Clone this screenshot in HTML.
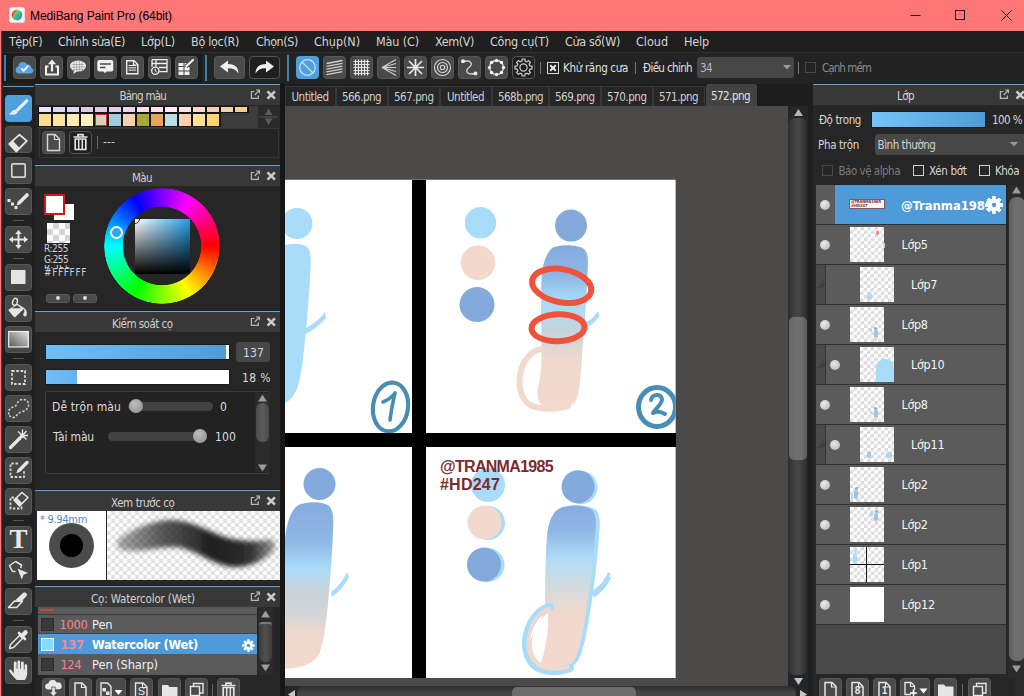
<!DOCTYPE html>
<html lang="vi"><head><meta charset="utf-8"><title>MediBang Paint Pro (64bit)</title>
<style>
html,body{margin:0;padding:0;background:#222;}
body{width:1024px;height:696px;overflow:hidden;}
#app{position:relative;width:1024px;height:696px;overflow:hidden;background:#232323;font-family:"DejaVu Sans Condensed","Liberation Sans","DejaVu Sans",sans-serif;font-size:12px;color:#d6d6d6;}
#app div,#app span.t,#app svg{position:absolute;box-sizing:border-box;}
span.t{white-space:pre;}
.btn{background:#4a4a4a;border-radius:3.5px;border:1px solid #585858;}
.btnd{background:#1f1f1f;border-radius:4px;border:1px solid #555;}
.tool{background:#474747;border-radius:3.5px;border:1px solid #585858;}
.hdr{background:#383838;border-top:1px solid #6aa6d2;box-shadow:0 -1px 0 #10202c;}
.tab{background:#262626;border:1px solid #383838;border-bottom:none;}
.row{background:#5b5b5b;border-bottom:1px solid #2e2e2e;}

</style></head>
<body>
<div id="app">
<div style="left:0px;top:0px;width:1024px;height:31px;background:#ff7676;"></div>
<div style="left:0px;top:31px;width:1px;height:665px;background:#ff7676;"></div>
<div style="left:1px;top:31px;width:1px;height:665px;background:#6a3434;"></div>
<svg style="left:9px;top:7px" width="16" height="16" viewBox="0 0 16 16"><defs><linearGradient id="lg0" x1="0" y1="0" x2="1" y2="1"><stop offset="0" stop-color="#f0e040"/><stop offset=".5" stop-color="#40c080"/><stop offset="1" stop-color="#2080d0"/></linearGradient></defs><rect x=".2" y=".2" width="15.600" height="15.600" rx="2.500" fill="#f4f4f4"/><circle cx="8" cy="8" r="5.300" fill="url(#lg0)"/><path d="M8 2.700a5.300 5.300 0 0 0-4.500 8c1-3 2.500-5 4.500-8z" fill="#f05040"/></svg>
<svg style="left:900px;top:0" width="124" height="31" viewBox="0 0 124 31"><g stroke="#111" stroke-width="1" fill="none"><path d="M10.5 15.5h10"/><rect x="55.5" y="10.5" width="9" height="9"/><path d="M101.5 10.5l10 10M111.5 10.5l-10 10"/></g></svg>
<div style="left:2px;top:31px;width:1022px;height:22px;background:#1f1f1f;"></div>
<div style="left:2px;top:52px;width:1022px;height:1px;background:#2e2e2e;"></div>
<div style="left:2px;top:53px;width:1022px;height:30px;background:#232323;"></div>
<div style="left:2px;top:53px;width:200px;height:30px;background:#1b1b1b;"></div>
<div style="left:4px;top:55px;width:2px;height:26px;background:#3f7fae;"></div>
<div style="left:205px;top:55px;width:2px;height:26px;background:#3f7fae;"></div>
<div style="left:287px;top:55px;width:2px;height:26px;background:#3f7fae;"></div>
<div class="btn" style="left:13px;top:56px;width:23px;height:23px;"></div>
<div class="btn" style="left:40px;top:56px;width:23px;height:23px;"></div>
<div class="btn" style="left:67px;top:56px;width:23px;height:23px;"></div>
<div class="btn" style="left:94px;top:56px;width:23px;height:23px;"></div>
<div class="btn" style="left:121px;top:56px;width:23px;height:23px;"></div>
<div class="btn" style="left:148px;top:56px;width:23px;height:23px;"></div>
<div class="btn" style="left:175px;top:56px;width:23px;height:23px;"></div>
<div class="btn" style="left:214px;top:56px;width:31px;height:23px;"></div>
<div class="btnd" style="left:249px;top:56px;width:31px;height:23px;"></div>
<div class="btn" style="left:296px;top:56px;width:23px;height:23px;background:#4f9fdc;border-color:#4f9fdc;"></div>
<div class="btn" style="left:323px;top:56px;width:23px;height:23px;"></div>
<div class="btn" style="left:350px;top:56px;width:23px;height:23px;"></div>
<div class="btn" style="left:377px;top:56px;width:23px;height:23px;"></div>
<div class="btn" style="left:404px;top:56px;width:23px;height:23px;"></div>
<div class="btn" style="left:431px;top:56px;width:23px;height:23px;"></div>
<div class="btn" style="left:458px;top:56px;width:23px;height:23px;"></div>
<div class="btn" style="left:485px;top:56px;width:23px;height:23px;"></div>
<div class="btnd" style="left:512px;top:56px;width:23px;height:23px;"></div>
<div style="left:540px;top:62px;width:1px;height:12px;background:#777;"></div>
<div style="left:635px;top:62px;width:1px;height:12px;background:#777;"></div>
<div style="left:798px;top:62px;width:1px;height:12px;background:#777;"></div>
<svg style="left:547px;top:62px" width="12" height="12" viewBox="0 0 12 12"><rect x=".5" y=".5" width="11" height="11" fill="#222" stroke="#d8d8d8"/><path d="M3.2 3.2l5.6 5.6M8.8 3.2l-5.6 5.6" stroke="#e8e8e8" stroke-width="2"/></svg>
<div style="left:697px;top:57px;width:97px;height:21px;background:#474747;border-radius:3px;"></div>
<svg style="left:783px;top:65px" width="8" height="5" viewBox="0 0 8 5"><path d="M0 0h8l-4 4.500z" fill="#9a9a9a"/></svg>
<div style="left:805px;top:62px;width:11px;height:11px;border:1px solid #4a4a4a;"></div>
<div style="left:2px;top:83px;width:33px;height:613px;background:#212121;"></div>
<div style="left:3px;top:86px;width:31px;height:1px;background:#5c9cc8;"></div>
<div class="tool" style="left:5px;top:95px;width:27px;height:27px;background:#4f9fdc;border-color:#4f9fdc;"></div>
<div class="tool" style="left:5px;top:126px;width:27px;height:27px;"></div>
<div class="tool" style="left:5px;top:157px;width:27px;height:27px;"></div>
<div class="tool" style="left:5px;top:188px;width:27px;height:27px;"></div>
<div class="tool" style="left:5px;top:226px;width:27px;height:27px;"></div>
<div class="tool" style="left:5px;top:264px;width:27px;height:27px;"></div>
<div class="tool" style="left:5px;top:295px;width:27px;height:27px;"></div>
<div class="tool" style="left:5px;top:326px;width:27px;height:27px;"></div>
<div class="tool" style="left:5px;top:364px;width:27px;height:27px;"></div>
<div class="tool" style="left:5px;top:395px;width:27px;height:27px;"></div>
<div class="tool" style="left:5px;top:426px;width:27px;height:27px;"></div>
<div class="tool" style="left:5px;top:457px;width:27px;height:27px;"></div>
<div class="tool" style="left:5px;top:488px;width:27px;height:27px;"></div>
<div class="tool" style="left:5px;top:526px;width:27px;height:27px;"></div>
<div class="tool" style="left:5px;top:557px;width:27px;height:27px;"></div>
<div class="tool" style="left:5px;top:588px;width:27px;height:27px;"></div>
<div class="tool" style="left:5px;top:626px;width:27px;height:27px;"></div>
<div class="tool" style="left:5px;top:657px;width:27px;height:27px;"></div>
<div style="left:13px;top:220px;width:11px;height:1px;background:#555;"></div>
<div style="left:13px;top:258px;width:11px;height:1px;background:#555;"></div>
<div style="left:13px;top:358px;width:11px;height:1px;background:#555;"></div>
<div style="left:13px;top:520px;width:11px;height:1px;background:#555;"></div>
<div style="left:13px;top:620px;width:11px;height:1px;background:#555;"></div>
<div style="left:35px;top:83px;width:250px;height:613px;background:#262626;"></div>
<div style="left:280px;top:83px;width:5px;height:613px;background:#171717;"></div>
<div class="hdr" style="left:35px;top:84px;width:245px;height:21px;"></div>
<svg style="left:250px;top:89px" width="28" height="12" viewBox="0 0 28 12"><g transform="translate(.8 .3) scale(.88)"><path d="M4 2.500h-3.300v7.800h7.800v-3.300" fill="none" stroke="#b8b8b8" stroke-width="1.400"/><path d="M4.500 6.500l5-5.300M6 .800h3.800v3.800" fill="none" stroke="#b8b8b8" stroke-width="1.400"/></g><path d="M17.500 2.300l7.400 7.400M24.900 2.300l-7.400 7.400" stroke="#cacaca" stroke-width="2.600"/></svg>
<div class="hdr" style="left:35px;top:165px;width:245px;height:21px;"></div>
<svg style="left:250px;top:170px" width="28" height="12" viewBox="0 0 28 12"><g transform="translate(.8 .3) scale(.88)"><path d="M4 2.500h-3.300v7.800h7.800v-3.300" fill="none" stroke="#b8b8b8" stroke-width="1.400"/><path d="M4.500 6.500l5-5.300M6 .800h3.800v3.800" fill="none" stroke="#b8b8b8" stroke-width="1.400"/></g><path d="M17.500 2.300l7.400 7.400M24.900 2.300l-7.400 7.400" stroke="#cacaca" stroke-width="2.600"/></svg>
<div class="hdr" style="left:35px;top:311px;width:245px;height:21px;"></div>
<svg style="left:250px;top:316px" width="28" height="12" viewBox="0 0 28 12"><g transform="translate(.8 .3) scale(.88)"><path d="M4 2.500h-3.300v7.800h7.800v-3.300" fill="none" stroke="#b8b8b8" stroke-width="1.400"/><path d="M4.500 6.500l5-5.300M6 .800h3.800v3.800" fill="none" stroke="#b8b8b8" stroke-width="1.400"/></g><path d="M17.500 2.300l7.400 7.400M24.900 2.300l-7.400 7.400" stroke="#cacaca" stroke-width="2.600"/></svg>
<div class="hdr" style="left:35px;top:490px;width:245px;height:21px;"></div>
<svg style="left:250px;top:495px" width="28" height="12" viewBox="0 0 28 12"><g transform="translate(.8 .3) scale(.88)"><path d="M4 2.500h-3.300v7.800h7.800v-3.300" fill="none" stroke="#b8b8b8" stroke-width="1.400"/><path d="M4.500 6.500l5-5.300M6 .800h3.800v3.800" fill="none" stroke="#b8b8b8" stroke-width="1.400"/></g><path d="M17.500 2.300l7.400 7.400M24.900 2.300l-7.400 7.400" stroke="#cacaca" stroke-width="2.600"/></svg>
<div class="hdr" style="left:35px;top:586px;width:245px;height:21px;"></div>
<svg style="left:250px;top:591px" width="28" height="12" viewBox="0 0 28 12"><g transform="translate(.8 .3) scale(.88)"><path d="M4 2.500h-3.300v7.800h7.800v-3.300" fill="none" stroke="#b8b8b8" stroke-width="1.400"/><path d="M4.500 6.500l5-5.300M6 .800h3.800v3.800" fill="none" stroke="#b8b8b8" stroke-width="1.400"/></g><path d="M17.500 2.300l7.400 7.400M24.900 2.300l-7.400 7.400" stroke="#cacaca" stroke-width="2.600"/></svg>
<div style="left:38px;top:106px;width:220px;height:22px;background:#3c3c3c;"></div>
<div style="left:38px;top:106px;width:211px;height:7px;background:#141414;"></div>
<div style="left:38px;top:113px;width:183px;height:14px;background:#141414;"></div>
<div style="left:39px;top:107px;width:12px;height:5px;background:#e4e4fa;"></div>
<div style="left:53px;top:107px;width:12px;height:5px;background:#dcd8f4;"></div>
<div style="left:67px;top:107px;width:12px;height:5px;background:#dcd6f2;"></div>
<div style="left:81px;top:107px;width:12px;height:5px;background:#dccae8;"></div>
<div style="left:95px;top:107px;width:12px;height:5px;background:#e2c6e2;"></div>
<div style="left:109px;top:107px;width:12px;height:5px;background:#e8cce6;"></div>
<div style="left:123px;top:107px;width:12px;height:5px;background:#ecd6ee;"></div>
<div style="left:137px;top:107px;width:12px;height:5px;background:#f8dee8;"></div>
<div style="left:151px;top:107px;width:12px;height:5px;background:#fbe2e6;"></div>
<div style="left:165px;top:107px;width:12px;height:5px;background:#fdeaf6;"></div>
<div style="left:179px;top:107px;width:12px;height:5px;background:#fce2e0;"></div>
<div style="left:193px;top:107px;width:12px;height:5px;background:#fbd8d0;"></div>
<div style="left:207px;top:107px;width:12px;height:5px;background:#f9cdb6;"></div>
<div style="left:221px;top:107px;width:12px;height:5px;background:#f8d0b0;"></div>
<div style="left:235px;top:107px;width:12px;height:5px;background:#f8cf8a;"></div>
<div style="left:39px;top:114px;width:12px;height:12px;background:#fbdc8c;"></div>
<div style="left:53px;top:114px;width:12px;height:12px;background:#fde5a0;"></div>
<div style="left:67px;top:114px;width:12px;height:12px;background:#fdeab0;"></div>
<div style="left:81px;top:114px;width:12px;height:12px;background:#fdf0bc;"></div>
<div style="left:95px;top:114px;width:12px;height:12px;background:#d8d2b4;border:1px solid #d03030;"></div>
<div style="left:109px;top:114px;width:12px;height:12px;background:#a4cce0;"></div>
<div style="left:123px;top:114px;width:12px;height:12px;background:#f7d0b4;"></div>
<div style="left:137px;top:114px;width:12px;height:12px;background:#a8a838;"></div>
<div style="left:151px;top:114px;width:12px;height:12px;background:#e8a45c;"></div>
<div style="left:165px;top:114px;width:12px;height:12px;background:#b8e0e0;"></div>
<div style="left:179px;top:114px;width:12px;height:12px;background:#fbcfb0;"></div>
<div style="left:193px;top:114px;width:12px;height:12px;background:#fde090;"></div>
<div style="left:207px;top:114px;width:12px;height:12px;background:#fcd470;"></div>
<div style="left:258px;top:106px;width:22px;height:22px;background:#2a2a2a;"></div>
<svg style="left:259px;top:107px" width="20" height="20" viewBox="0 0 20 20"><path d="M9.500 1.500l3.800 6.500h-7.600zM9.500 18l3.800-6.500h-7.600z" fill="#5c5c5c"/><path d="M0 10h19" stroke="#484848" stroke-width="1.500"/></svg>
<div style="left:39px;top:128px;width:240px;height:30px;background:#252525;border:1px solid #363636;"></div>
<div class="btn" style="left:42px;top:131px;width:23px;height:23px;"></div>
<div class="btnd" style="left:69px;top:131px;width:23px;height:23px;"></div>
<div style="left:97px;top:136px;width:1px;height:13px;background:#666;"></div>
<div style="left:44px;top:194px;width:21px;height:21px;background:#fff;border:2px solid #d01818;z-index:2;"></div>
<div style="left:54px;top:204px;width:20px;height:16px;background:#fff;"></div>
<div style="left:47px;top:223px;width:23px;height:20px;background:#fff;background-image:linear-gradient(45deg,#d4d4d4 25%,transparent 25%,transparent 75%,#d4d4d4 75%),linear-gradient(45deg,#d4d4d4 25%,transparent 25%,transparent 75%,#d4d4d4 75%);background-size:12px 12px;background-position:0 0,6px 6px;"></div>
<div style="left:44px;top:265px;width:40px;height:4px;overflow:hidden;"><span class="t" style="left:0;top:-2px;font-size:10px;line-height:12px;color:#d0d0d0">B:255</span></div>
<div style="left:46px;top:294px;width:24px;height:9px;background:#4a4a4a;border-radius:3px;border:1px solid #5a5a5a;"></div>
<div style="left:73px;top:294px;width:24px;height:9px;background:#4a4a4a;border-radius:3px;border:1px solid #5a5a5a;"></div>
<div style="left:56px;top:296px;width:4px;height:4px;background:#ddd;border-radius:2px;"></div>
<div style="left:83px;top:296px;width:4px;height:4px;background:#ddd;border-radius:2px;"></div>
<div style="left:104px;top:188px;width:116px;height:116px;border-radius:50%;background:conic-gradient(from 90deg,#f00,#ff0,#0f0,#0ff,#00f,#f0f,#f00);-webkit-mask:radial-gradient(circle,transparent 38.8px,#000 39.6px,#000 57.4px,transparent 58.2px);mask:radial-gradient(circle,transparent 38.8px,#000 39.6px,#000 57.4px,transparent 58.2px);"></div>
<div style="left:135px;top:219px;width:55px;height:55px;background:linear-gradient(to bottom,rgba(0,0,0,0),#000),linear-gradient(to right,#fff,#1f9fe8);overflow:hidden;"><div style="left:-5px;top:-5px;width:10px;height:10px;border:1px solid #333;border-radius:50%;background:#f4f4f4"></div></div>
<div style="left:110px;top:226px;width:13px;height:13px;border:2.5px solid #fff;border-radius:50%;background:#2aa8f0;"></div>
<div style="left:45px;top:344px;width:185px;height:16px;background:linear-gradient(to right,#6fc0f8,#4f9bd6);border:1px solid #1a1a1a;"></div>
<div style="left:226px;top:345px;width:3px;height:14px;background:#fff;"></div>
<div style="left:236px;top:342px;width:34px;height:20px;background:#474747;border-radius:3px;"></div>
<div style="left:45px;top:369px;width:185px;height:16px;background:#fff;border:1px solid #1a1a1a;"></div>
<div style="left:46px;top:370px;width:31px;height:14px;background:linear-gradient(to right,#6fc0f8,#62b4f0);"></div>
<div style="left:45px;top:391px;width:225px;height:83px;background:#222;border:1px solid #3c3c3c;border-radius:2px;"></div>
<div style="left:128px;top:402px;width:85px;height:9px;background:#424242;border-radius:5px;"></div>
<div style="left:129px;top:399px;width:14px;height:14px;border-radius:50%;background:radial-gradient(circle at 40% 35%,#bdbdbd,#8a8a8a);"></div>
<div style="left:108px;top:432px;width:99px;height:9px;background:#424242;border-radius:5px;"></div>
<div style="left:193px;top:429px;width:14px;height:14px;border-radius:50%;background:radial-gradient(circle at 40% 35%,#bdbdbd,#8a8a8a);"></div>
<div style="left:255px;top:393px;width:15px;height:79px;background:#2b2b2b;"></div>
<div style="left:256px;top:403px;width:13px;height:39px;border-radius:6px;background:linear-gradient(to right,#4a4a4a,#5c5c5c,#4a4a4a);"></div>
<svg style="left:257px;top:394px" width="11" height="8" viewBox="0 0 11 8"><path d="M5.5 0.5l4.5 7h-9z" fill="#9a9a9a"/></svg>
<svg style="left:257px;top:464px" width="11" height="8" viewBox="0 0 11 8"><path d="M5.5 7.5l4.5-7h-9z" fill="#9a9a9a"/></svg>
<div style="left:37px;top:511px;width:69px;height:69px;background:#fff;"></div>
<div style="left:107px;top:511px;width:173px;height:69px;background-color:#fff;background-image:linear-gradient(45deg,#e2e2e2 25%,transparent 25%,transparent 75%,#e2e2e2 75%),linear-gradient(45deg,#e2e2e2 25%,transparent 25%,transparent 75%,#e2e2e2 75%);background-size:8px 8px;background-position:0 0,4px 4px;"></div>
<svg style="left:107px;top:511px" width="173" height="69" viewBox="107 511 173 69"><defs><linearGradient id="bs" x1="0" y1="0" x2="1" y2="0"><stop offset="0" stop-color="#303030" stop-opacity=".4"/><stop offset=".3" stop-color="#2a2a2a" stop-opacity=".78"/><stop offset=".6" stop-color="#161616" stop-opacity=".96"/><stop offset=".85" stop-color="#1c1c1c" stop-opacity=".9"/><stop offset="1" stop-color="#2a2a2a" stop-opacity=".45"/></linearGradient><filter id="bl" filterUnits="userSpaceOnUse" x="100" y="505" width="190" height="80"><feGaussianBlur stdDeviation="2.400"/></filter></defs><path d="M119 539C127 533 150 520 171 520C192 520 212 534 228 538C244 542 258 542 271 539C276 541 276 549 272 553C262 561 248 568 233 567C212 565 196 549 176 547C160 546 140 553 122 550C116 548 116 542 119 539Z" fill="url(#bs)" filter="url(#bl)"/></svg>
<div style="left:49px;top:523px;width:45px;height:45px;background:#4b4b4b;border-radius:50%;"></div>
<div style="left:60px;top:534px;width:23px;height:23px;background:#000;border-radius:50%;"></div>
<div style="left:38px;top:607px;width:219px;height:68px;background:#5a5a5a;"></div>
<div style="left:38px;top:607px;width:219px;height:8px;background:#5a5a5a;border-bottom:1px solid #3a3a3a;"></div>
<div style="left:40px;top:609px;width:14px;height:2px;background:#d84040;"></div>
<div style="left:38px;top:615px;width:219px;height:19px;background:#5a5a5a;border-bottom:1px solid #444;"></div>
<div style="left:38px;top:634px;width:219px;height:20px;background:#4f9ad8;"></div>
<div style="left:38px;top:654px;width:219px;height:21px;background:#5a5a5a;"></div>
<div style="left:41px;top:618px;width:13px;height:13px;background:#3a3a3a;border:1px solid #2c2c2c;"></div>
<div style="left:41px;top:638px;width:13px;height:13px;background:#86dcf8;border:1px solid #e8f8ff;"></div>
<div style="left:41px;top:658px;width:13px;height:13px;background:#3a3a3a;border:1px solid #2c2c2c;"></div>
<div style="left:258px;top:607px;width:15px;height:68px;background:#2b2b2b;"></div>
<div style="left:259px;top:622px;width:13px;height:40px;border-radius:3px 3px 6px 6px;background:linear-gradient(to right,#3c3c3c,#505050,#3a3a3a);border-top:2px solid #7a7a7a;"></div>
<svg style="left:260px;top:610px" width="11" height="8" viewBox="0 0 11 8"><path d="M5.5 0.5l4.5 7h-9z" fill="#9a9a9a"/></svg>
<svg style="left:260px;top:664px" width="11" height="8" viewBox="0 0 11 8"><path d="M5.5 7.5l4.5-7h-9z" fill="#9a9a9a"/></svg>
<div class="btn" style="left:42px;top:678px;width:23px;height:23px;"></div>
<div class="btn" style="left:69px;top:678px;width:23px;height:23px;"></div>
<div class="btn" style="left:96px;top:678px;width:30px;height:23px;"></div>
<div class="btn" style="left:130px;top:678px;width:23px;height:23px;"></div>
<div class="btn" style="left:158px;top:678px;width:23px;height:23px;"></div>
<div class="btn" style="left:185px;top:678px;width:23px;height:23px;"></div>
<div class="btn" style="left:217px;top:678px;width:23px;height:23px;"></div>
<div style="left:212px;top:684px;width:1px;height:12px;background:#666;"></div>
<div style="left:285px;top:84px;width:525px;height:22px;background:#1d1d1d;"></div>
<div class="tab" style="left:285px;top:86px;width:51px;height:20px;"></div>
<div class="tab" style="left:336px;top:86px;width:52px;height:20px;"></div>
<div class="tab" style="left:388px;top:86px;width:52px;height:20px;"></div>
<div class="tab" style="left:440px;top:86px;width:52px;height:20px;"></div>
<div class="tab" style="left:492px;top:86px;width:57px;height:20px;"></div>
<div class="tab" style="left:549px;top:86px;width:52px;height:20px;"></div>
<div class="tab" style="left:601px;top:86px;width:52px;height:20px;"></div>
<div class="tab" style="left:653px;top:86px;width:52px;height:20px;"></div>
<div style="left:706px;top:84px;width:51px;height:22px;background:#424242;border-radius:3px 3px 0 0;border:1px solid #444;border-bottom:none;"></div>
<div style="left:285px;top:106px;width:525px;height:590px;background:#4b4a49;"></div>
<div style="left:788px;top:106px;width:20px;height:580px;background:#232628;"></div>
<div style="left:788px;top:118px;width:19px;height:557px;border-radius:7px;background:linear-gradient(to right,#2e2e2e,#424242 35%,#464646 60%,#2c2c2c);"></div>
<div style="left:789px;top:317px;width:18px;height:143px;border-radius:5px;background:linear-gradient(to right,#666,#717171 40%,#6e6e6e 70%,#5a5a5a);"></div>
<svg style="left:794px;top:109px" width="9" height="7" viewBox="0 0 9 7"><path d="M4.500 0l4.500 7h-9z" fill="#b4b4b4"/></svg>
<svg style="left:793.500px;top:677.500px" width="9" height="7" viewBox="0 0 9 7"><path d="M4.500 7l4.500-7h-9z" fill="#c4c4c4"/></svg>
<div style="left:285px;top:686px;width:523px;height:10px;background:#232628;"></div>
<div style="left:297px;top:686px;width:499px;height:14px;border-radius:7px;background:linear-gradient(to bottom,#2e2e2e,#444 50%,#484848);"></div>
<div style="left:511.5px;top:687px;width:124px;height:14px;background:#6c6c6c;border-radius:5px;"></div>
<svg style="left:288px;top:690px" width="7" height="9" viewBox="0 0 7 9"><path d="M0 4.500l7-4.500v9z" fill="#c4c4c4"/></svg>
<svg style="left:800px;top:690px" width="7" height="9" viewBox="0 0 7 9"><path d="M7 4.500l-7-4.500v9z" fill="#c4c4c4"/></svg>
<div style="left:808px;top:83px;width:5px;height:613px;background:#1e1e1e;"></div>
<div style="left:813px;top:83px;width:211px;height:613px;background:#262626;"></div>
<div class="hdr" style="left:813px;top:84px;width:211px;height:21px;"></div>
<svg style="left:999px;top:89px" width="28" height="12" viewBox="0 0 28 12"><g transform="translate(.8 .3) scale(.88)"><path d="M4 2.500h-3.300v7.800h7.800v-3.300" fill="none" stroke="#b8b8b8" stroke-width="1.400"/><path d="M4.500 6.500l5-5.300M6 .800h3.800v3.800" fill="none" stroke="#b8b8b8" stroke-width="1.400"/></g><path d="M17.500 2.300l7.400 7.400M24.900 2.300l-7.400 7.400" stroke="#cacaca" stroke-width="2.600"/></svg>
<div style="left:871px;top:111px;width:115px;height:17px;background:linear-gradient(to right,#74c4fa,#4f9bd6);border:1px solid #1a1a1a;"></div>
<div style="left:875px;top:134px;width:152px;height:21px;background:#474747;border-radius:3px;"></div>
<svg style="left:1010px;top:142px" width="8" height="5" viewBox="0 0 8 5"><path d="M0 0h8l-4 4.500z" fill="#9a9a9a"/></svg>
<div style="left:822px;top:165px;width:11px;height:11px;border:1px solid #484848;"></div>
<div style="left:913px;top:165px;width:11px;height:11px;border:1px solid #d0d0d0;"></div>
<div style="left:979px;top:165px;width:11px;height:11px;border:1px solid #d0d0d0;"></div>
<div style="left:816px;top:185px;width:190px;height:489px;background:#494949;"></div>
<div class="row" style="left:816px;top:185px;width:190px;height:40px;"></div>
<div style="left:835px;top:185px;width:171px;height:39px;background:#4f9ad8;"></div>
<div style="left:820px;top:200px;width:10px;height:10px;border-radius:50%;background:radial-gradient(circle at 40% 35%,#e8e8e8,#b4b4b4);"></div>
<div class="row" style="left:816px;top:225px;width:190px;height:40px;"></div>
<div style="left:820px;top:240px;width:10px;height:10px;border-radius:50%;background:radial-gradient(circle at 40% 35%,#e8e8e8,#b4b4b4);"></div>
<div style="left:850px;top:227px;width:34px;height:35px;background-color:#fff;background-image:linear-gradient(45deg,#dadada 25%,transparent 25%,transparent 75%,#dadada 75%),linear-gradient(45deg,#dadada 25%,transparent 25%,transparent 75%,#dadada 75%);background-size:7px 7px;background-position:0 0,3.5px 3.5px;"></div>
<div style="left:876px;top:231px;width:3px;height:4px;background:#e89090;border-radius:1px;"></div>
<div style="left:883px;top:243px;width:2px;height:5px;background:#c8dcea;border-radius:1px;"></div>
<div class="row" style="left:816px;top:265px;width:190px;height:40px;"></div>
<div style="left:816px;top:265px;width:10px;height:39px;background:#4a4a4a;border-right:1px solid #333;"></div>
<svg style="left:817px;top:279px" width="8" height="11" viewBox="0 0 8 11"><path d="M5.500 0v7M3 5l2.500 3 2.500-3M1 8.500h3" stroke="#3a3a3a" stroke-width="1.2" fill="none"/></svg>
<div style="left:860px;top:267px;width:34px;height:35px;background-color:#fff;background-image:linear-gradient(45deg,#dadada 25%,transparent 25%,transparent 75%,#dadada 75%),linear-gradient(45deg,#dadada 25%,transparent 25%,transparent 75%,#dadada 75%);background-size:7px 7px;background-position:0 0,3.5px 3.5px;"></div>
<div style="left:867px;top:292px;width:5px;height:8px;background:#b8dcf0;border-radius:3px;"></div>
<div class="row" style="left:816px;top:305px;width:190px;height:40px;"></div>
<div style="left:820px;top:320px;width:10px;height:10px;border-radius:50%;background:radial-gradient(circle at 40% 35%,#e8e8e8,#b4b4b4);"></div>
<div style="left:850px;top:307px;width:34px;height:35px;background-color:#fff;background-image:linear-gradient(45deg,#dadada 25%,transparent 25%,transparent 75%,#dadada 75%),linear-gradient(45deg,#dadada 25%,transparent 25%,transparent 75%,#dadada 75%);background-size:7px 7px;background-position:0 0,3.5px 3.5px;"></div>
<div style="left:874px;top:327px;width:3px;height:3px;background:#84aadc;border-radius:2px;"></div>
<div style="left:873.5px;top:330px;width:4px;height:8px;background:#9cc4e8;border-radius:2px;"></div>
<div style="left:874px;top:337px;width:3px;height:4px;background:#f0d0c0;border-radius:1px;"></div>
<div style="left:870px;top:328px;width:2px;height:4px;background:#b8d8f0;border-radius:1px;"></div>
<div class="row" style="left:816px;top:345px;width:190px;height:40px;"></div>
<div style="left:816px;top:345px;width:10px;height:39px;background:#4a4a4a;border-right:1px solid #333;"></div>
<svg style="left:817px;top:359px" width="8" height="11" viewBox="0 0 8 11"><path d="M5.500 0v7M3 5l2.500 3 2.500-3M1 8.500h3" stroke="#3a3a3a" stroke-width="1.2" fill="none"/></svg>
<div style="left:830px;top:360px;width:10px;height:10px;border-radius:50%;background:radial-gradient(circle at 40% 35%,#e8e8e8,#b4b4b4);"></div>
<div style="left:860px;top:347px;width:34px;height:35px;background-color:#fff;background-image:linear-gradient(45deg,#dadada 25%,transparent 25%,transparent 75%,#dadada 75%),linear-gradient(45deg,#dadada 25%,transparent 25%,transparent 75%,#dadada 75%);background-size:7px 7px;background-position:0 0,3.5px 3.5px;"></div>
<div style="left:876px;top:359px;width:18px;height:23px;background:#a8dcf8;border-radius:9px 9px 0 0;"></div>
<div class="row" style="left:816px;top:385px;width:190px;height:40px;"></div>
<div style="left:820px;top:400px;width:10px;height:10px;border-radius:50%;background:radial-gradient(circle at 40% 35%,#e8e8e8,#b4b4b4);"></div>
<div style="left:850px;top:387px;width:34px;height:35px;background-color:#fff;background-image:linear-gradient(45deg,#dadada 25%,transparent 25%,transparent 75%,#dadada 75%),linear-gradient(45deg,#dadada 25%,transparent 25%,transparent 75%,#dadada 75%);background-size:7px 7px;background-position:0 0,3.5px 3.5px;"></div>
<div style="left:874px;top:407px;width:3px;height:3px;background:#84aadc;border-radius:2px;"></div>
<div style="left:873.5px;top:410px;width:4px;height:8px;background:#9cc4e8;border-radius:2px;"></div>
<div style="left:874px;top:417px;width:3px;height:4px;background:#f0d0c0;border-radius:1px;"></div>
<div style="left:870px;top:411px;width:2px;height:3px;background:#b8d8f0;border-radius:1px;"></div>
<div class="row" style="left:816px;top:425px;width:190px;height:40px;"></div>
<div style="left:816px;top:425px;width:10px;height:39px;background:#4a4a4a;border-right:1px solid #333;"></div>
<svg style="left:817px;top:439px" width="8" height="11" viewBox="0 0 8 11"><path d="M5.500 0v7M3 5l2.500 3 2.500-3M1 8.500h3" stroke="#3a3a3a" stroke-width="1.2" fill="none"/></svg>
<div style="left:830px;top:440px;width:10px;height:10px;border-radius:50%;background:radial-gradient(circle at 40% 35%,#e8e8e8,#b4b4b4);"></div>
<div style="left:860px;top:427px;width:34px;height:35px;background-color:#fff;background-image:linear-gradient(45deg,#dadada 25%,transparent 25%,transparent 75%,#dadada 75%),linear-gradient(45deg,#dadada 25%,transparent 25%,transparent 75%,#dadada 75%);background-size:7px 7px;background-position:0 0,3.5px 3.5px;"></div>
<div style="left:867px;top:451px;width:4px;height:7px;background:#a8c8e8;border-radius:2px;"></div>
<div style="left:886px;top:452px;width:6px;height:6px;background:#b0d4f0;border-radius:2px;"></div>
<div class="row" style="left:816px;top:465px;width:190px;height:40px;"></div>
<div style="left:820px;top:480px;width:10px;height:10px;border-radius:50%;background:radial-gradient(circle at 40% 35%,#e8e8e8,#b4b4b4);"></div>
<div style="left:850px;top:467px;width:34px;height:35px;background-color:#fff;background-image:linear-gradient(45deg,#dadada 25%,transparent 25%,transparent 75%,#dadada 75%),linear-gradient(45deg,#dadada 25%,transparent 25%,transparent 75%,#dadada 75%);background-size:7px 7px;background-position:0 0,3.5px 3.5px;"></div>
<div style="left:855px;top:487px;width:3px;height:3px;background:#84aadc;border-radius:2px;"></div>
<div style="left:854px;top:490px;width:4px;height:9px;background:#9cc4e8;border-radius:2px;"></div>
<div style="left:851px;top:494px;width:2px;height:5px;background:#b8d8f0;border-radius:1px;"></div>
<div style="left:856px;top:498px;width:2px;height:3px;background:#f0d0c0;border-radius:1px;"></div>
<div class="row" style="left:816px;top:505px;width:190px;height:40px;"></div>
<div style="left:820px;top:520px;width:10px;height:10px;border-radius:50%;background:radial-gradient(circle at 40% 35%,#e8e8e8,#b4b4b4);"></div>
<div style="left:850px;top:507px;width:34px;height:35px;background-color:#fff;background-image:linear-gradient(45deg,#dadada 25%,transparent 25%,transparent 75%,#dadada 75%),linear-gradient(45deg,#dadada 25%,transparent 25%,transparent 75%,#dadada 75%);background-size:7px 7px;background-position:0 0,3.5px 3.5px;"></div>
<div style="left:875px;top:510px;width:3px;height:3px;background:#84aadc;border-radius:2px;"></div>
<div style="left:874px;top:513px;width:4px;height:8px;background:#9cc4e8;border-radius:2px;"></div>
<div style="left:870px;top:511px;width:3px;height:5px;background:#b8d8f0;border-radius:1px;"></div>
<div style="left:875px;top:521px;width:3px;height:4px;background:#f0d0c0;border-radius:1px;"></div>
<div class="row" style="left:816px;top:545px;width:190px;height:40px;"></div>
<div style="left:820px;top:560px;width:10px;height:10px;border-radius:50%;background:radial-gradient(circle at 40% 35%,#e8e8e8,#b4b4b4);"></div>
<div style="left:850px;top:547px;width:34px;height:35px;background-color:#fff;background-image:linear-gradient(45deg,#dadada 25%,transparent 25%,transparent 75%,#dadada 75%),linear-gradient(45deg,#dadada 25%,transparent 25%,transparent 75%,#dadada 75%);background-size:7px 7px;background-position:0 0,3.5px 3.5px;"></div>
<div style="left:854px;top:550px;width:3px;height:3px;background:#a8dcf8;border-radius:2px;"></div>
<div style="left:853px;top:553px;width:4px;height:11px;background:#a8dcf8;border-radius:2px;"></div>
<div style="left:866px;top:547px;width:1px;height:35px;background:#111;"></div>
<div style="left:850px;top:564px;width:34px;height:1px;background:#111;"></div>
<div class="row" style="left:816px;top:585px;width:190px;height:40px;"></div>
<div style="left:820px;top:600px;width:10px;height:10px;border-radius:50%;background:radial-gradient(circle at 40% 35%,#e8e8e8,#b4b4b4);"></div>
<div style="left:850px;top:587px;width:34px;height:35px;background-color:#fff;background-image:linear-gradient(45deg,#dadada 25%,transparent 25%,transparent 75%,#dadada 75%),linear-gradient(45deg,#dadada 25%,transparent 25%,transparent 75%,#dadada 75%);background-size:7px 7px;background-position:0 0,3.5px 3.5px;"></div>
<div style="left:850px;top:587px;width:34px;height:35px;background:#fff;"></div>
<div style="left:849px;top:199px;width:36px;height:10px;background:#f8f2f2;border:1px solid #7a5a5a;overflow:hidden;"><span class="t" style="left:1px;top:0;font-size:4px;line-height:4px;color:#8a3030;font-weight:bold;letter-spacing:-.1px">@TRANMA1985</span><span class="t" style="left:1px;top:4px;font-size:4px;line-height:4px;color:#8a3030;font-weight:bold">#HD247</span></div>
<div style="left:1008px;top:185px;width:16px;height:493px;background:#2b2b2b;"></div>
<div style="left:1009px;top:197px;width:16px;height:464px;border-radius:7px;background:linear-gradient(to right,#5e5e5e,#6e6e6e 40%,#6a6a6a);"></div>
<svg style="left:1011px;top:186px" width="11" height="8" viewBox="0 0 11 8"><path d="M5.5 0.5l4.5 7h-9z" fill="#9a9a9a"/></svg>
<svg style="left:1011px;top:665px" width="11" height="8" viewBox="0 0 11 8"><path d="M5.5 7.5l4.5-7h-9z" fill="#9a9a9a"/></svg>
<div class="btn" style="left:819px;top:678px;width:23px;height:23px;"></div>
<div class="btn" style="left:846px;top:678px;width:23px;height:23px;"></div>
<div class="btn" style="left:873px;top:678px;width:23px;height:23px;"></div>
<div class="btn" style="left:900px;top:678px;width:30px;height:23px;"></div>
<div class="btn" style="left:934px;top:678px;width:23px;height:23px;"></div>
<div class="btn" style="left:968px;top:678px;width:23px;height:23px;"></div>
<div style="left:962px;top:684px;width:1px;height:12px;background:#666;"></div>
<div style="left:1015px;top:678px;width:9px;height:18px;background:#2b2b2b;"></div>
<svg style="left:13px;top:56px;" width="23" height="23" viewBox="0 0 23 23"><path d="M6 17.500a3.600 3.600 0 0 1-.6-7.100 4.600 4.600 0 0 1 8.800-1.700 3.300 3.300 0 0 1 4.300 3.200 2.900 2.900 0 0 1-1 5.600z" fill="#5fa4e6"/><path d="M8.300 12.300l2.400 2.400 4.600-5" fill="none" stroke="#fff" stroke-width="1.900"/></svg>
<svg style="left:40px;top:56px;" width="23" height="23" viewBox="0 0 23 23"><path d="M8.500 10.500h-2.500v8h12v-8h-2.500" fill="none" stroke="#efefef" stroke-width="2"/><path d="M12 15.500v-9" stroke="#efefef" stroke-width="2.200"/><path d="M7.800 8.200l4.200-4.700 4.200 4.700z" fill="#efefef"/></svg>
<svg style="left:67px;top:56px;" width="23" height="23" viewBox="0 0 23 23"><ellipse cx="11" cy="10" rx="8" ry="5.600" fill="#efefef"/><path d="M7 14l-.5 4 4.500-3.500z" fill="#efefef"/><path d="M5 8.500h12M4 11h14M6 13.500h10M7 5v10M9.700 4.500v11M12.400 4.500v11M15 5v10" stroke="#8a8a8a" stroke-width=".6"/></svg>
<svg style="left:94px;top:56px;" width="23" height="23" viewBox="0 0 23 23"><rect x="3.300" y="4" width="16" height="11.500" rx="2" fill="#efefef"/><path d="M9.500 15l1.500 2.500 1.500-2.500z" fill="#efefef"/><path d="M6 8h11M6 11.500h5.500" stroke="#4a4a4a" stroke-width="1.600"/></svg>
<svg style="left:121px;top:56px;" width="23" height="23" viewBox="0 0 23 23"><path d="M5.700 4.800h7.300l3.800 3.800v9.200h-11.100z" fill="none" stroke="#efefef" stroke-width="1.400"/><path d="M12.500 5v4h4" fill="none" stroke="#efefef" stroke-width="1.200"/><path d="M7.500 9.500h7.500M7.500 11.800h7.500M7.500 14.100h7.500" stroke="#efefef" stroke-width="1"/></svg>
<svg style="left:148px;top:56px;" width="23" height="23" viewBox="0 0 23 23"><path d="M4 3.700h15v12h-8M4 3.700v7M4 7.500h15M11 11.500h8M8 3.700v7" fill="none" stroke="#efefef" stroke-width="1.300"/><circle cx="7.300" cy="14.800" r="3.600" fill="#4a4a4a" stroke="#efefef" stroke-width="1.300"/><path d="M7.300 12.800v2.200l1.600 1.200" fill="none" stroke="#efefef" stroke-width="1"/></svg>
<svg style="left:175px;top:56px;" width="23" height="23" viewBox="0 0 23 23"><path d="M3.500 7h5v3h-5zM9.500 7h5v3h-5zM3.500 11h5v3.500h-5zM9.500 11h5v3.500h-5zM3.500 15.500h5v3.500h-5zM9.500 15.500h5v3.500h-5z" fill="#efefef"/><path d="M11 10.500l7.500-7" stroke="#4a4a4a" stroke-width="4"/><path d="M11.500 10l6.500-6" stroke="#efefef" stroke-width="2.200" stroke-linecap="round"/></svg>
<svg style="left:214px;top:56px;" width="31" height="23" viewBox="0 0 31 23"><path d="M6 10.500l8-6v3.600c6 0 10.500 3 10.500 9.400-2.200-3.600-5.500-5.400-10.500-5.200v4.200z" fill="#efefef"/></svg>
<svg style="left:249px;top:56px;" width="31" height="23" viewBox="0 0 31 23"><g transform="translate(31,0) scale(-1,1)"><path d="M6 10.500l8-6v3.600c6 0 10.500 3 10.500 9.400-2.200-3.600-5.500-5.400-10.500-5.200v4.200z" fill="#efefef"/></g></svg>
<svg style="left:296px;top:56px;" width="23" height="23" viewBox="0 0 23 23"><circle cx="11.500" cy="11.500" r="7.800" fill="none" stroke="#bfe0fb" stroke-width="1.300"/><path d="M6 6l11 11" stroke="#bfe0fb" stroke-width="1.300"/></svg>
<svg style="left:323px;top:56px;" width="23" height="23" viewBox="0 0 23 23"><path d="M3.500 7.500l16-3M3.500 10.300l16-3M3.500 13.100l16-3M3.500 15.900l16-3M3.500 18.700l16-3" stroke="#cfcfcf" stroke-width="1.300"/></svg>
<svg style="left:350px;top:56px;" width="23" height="23" viewBox="0 0 23 23"><path d="M5.500 3.500v16M8.500 3.500v16M11.500 3.500v16M14.500 3.500v16M17.500 3.500v16M3.500 5.500h16M3.500 8.500h16M3.500 11.500h16M3.500 14.500h16M3.500 17.500h16" stroke="#e4e4e4" stroke-width="1.200"/></svg>
<svg style="left:377px;top:56px;" width="23" height="23" viewBox="0 0 23 23"><path d="M5 11.500l14-8M5 11.500l14-4M5 11.500h14M5 11.500l14 4M5 11.500l14 8" stroke="#cfcfcf" stroke-width="1.100"/></svg>
<svg style="left:404px;top:56px;" width="23" height="23" viewBox="0 0 23 23"><path d="M11.500 3v17M3 11.500h17M5 5l13 13M18 5l-13 13" stroke="#e8e8e8" stroke-width="1.700"/></svg>
<svg style="left:431px;top:56px;" width="23" height="23" viewBox="0 0 23 23"><circle cx="11.500" cy="11.500" r="8" fill="none" stroke="#d8d8d8" stroke-width="1.100"/><circle cx="11.500" cy="11.500" r="5" fill="none" stroke="#d8d8d8" stroke-width="1.100"/><circle cx="11.500" cy="11.500" r="2.200" fill="none" stroke="#d8d8d8" stroke-width="1.100"/></svg>
<svg style="left:458px;top:56px;" width="23" height="23" viewBox="0 0 23 23"><path d="M5 5.500c9-2 10 3 6 6s-3 8 6.500 6" fill="none" stroke="#d8d8d8" stroke-width="1.300"/><circle cx="5" cy="5.300" r="2" fill="#e8e8e8"/><circle cx="17.500" cy="17.500" r="2" fill="#e8e8e8"/></svg>
<svg style="left:485px;top:56px;" width="23" height="23" viewBox="0 0 23 23"><circle cx="11.500" cy="11.500" r="7" fill="none" stroke="#e0e0e0" stroke-width="1.300"/><circle cx="18.50" cy="11.50" r="1.700" fill="#f4f4f4"/><circle cx="16.45" cy="16.45" r="1.700" fill="#f4f4f4"/><circle cx="11.50" cy="18.50" r="1.700" fill="#f4f4f4"/><circle cx="6.55" cy="16.45" r="1.700" fill="#f4f4f4"/><circle cx="4.50" cy="11.50" r="1.700" fill="#f4f4f4"/><circle cx="6.55" cy="6.55" r="1.700" fill="#f4f4f4"/><circle cx="11.50" cy="4.50" r="1.700" fill="#f4f4f4"/><circle cx="16.45" cy="6.55" r="1.700" fill="#f4f4f4"/></svg>
<svg style="left:512px;top:56px;" width="23" height="23" viewBox="0 0 23 23"><path d="M17.92 9.96L19.99 10.15L19.99 12.85L17.92 13.04L17.13 14.95L18.46 16.55L16.55 18.46L14.95 17.13L13.04 17.92L12.85 19.99L10.15 19.99L9.96 17.92L8.05 17.13L6.45 18.46L4.54 16.55L5.87 14.95L5.08 13.04L3.01 12.85L3.01 10.15L5.08 9.96L5.87 8.05L4.54 6.45L6.45 4.54L8.05 5.87L9.96 5.08L10.15 3.01L12.85 3.01L13.04 5.08L14.95 5.87L16.55 4.54L18.46 6.45L17.13 8.05z" fill="none" stroke="#cfcfcf" stroke-width="1.200"/><circle cx="11.500" cy="11.500" r="3.600" fill="none" stroke="#cfcfcf" stroke-width="1.200"/></svg>
<svg style="left:5px;top:95px;" width="27" height="27" viewBox="0 0 27 27"><path d="M21.700 5.800l-9 8.800" stroke="#e6f3ff" stroke-width="3.200" stroke-linecap="round"/><path d="M12.200 15.700c-1.500-1.700-4.500-.8-5.500 1-1 1.500-2 1.800-3 2 2.500 1.800 7 1.500 8.500-1 .5-.8.400-1.500 0-2z" fill="#e6f3ff"/><circle cx="8.500" cy="18" r="1.300" fill="#f8d8c0"/></svg>
<svg style="left:5px;top:126px;" width="27" height="27" viewBox="0 0 27 27"><path d="M14.500 8.700l7.300 6.200-10.600 10.600-7-7.700z" fill="none" stroke="#e6e6e6" stroke-width="1.800" stroke-linejoin="round"/><path d="M4.200 17.800l3.200-3.500 7.300 7.700-3.500 3.500z" fill="#e6e6e6"/></svg>
<svg style="left:5px;top:157px;" width="27" height="27" viewBox="0 0 27 27"><rect x="6.800" y="6.800" width="13.400" height="13.400" rx="1" fill="none" stroke="#d4d4d4" stroke-width="1.700"/></svg>
<svg style="left:5px;top:188px;" width="27" height="27" viewBox="0 0 27 27"><path d="M22 7l-7.500 7.500" stroke="#e6e6e6" stroke-width="3.600" stroke-linecap="round"/><path d="M13 13.500l2.500 2.500-4 1.500z" fill="#e6e6e6"/><path d="M2.500 11h3v3h-3zM6 14.500h3v3h-3zM9.500 18h3v3h-3z" fill="#e6e6e6"/></svg>
<svg style="left:5px;top:226px;" width="27" height="27" viewBox="0 0 27 27"><path d="M13.500 4l3.300 4h-2.300v4.500h4.500v-2.300l4 3.300-4 3.300v-2.300h-4.500v4.500h2.300l-3.300 4-3.300-4h2.300v-4.500h-4.500v2.300l-4-3.300 4-3.300v2.300h4.500v-4.500h-2.300z" fill="#e6e6e6"/></svg>
<svg style="left:5px;top:264px;" width="27" height="27" viewBox="0 0 27 27"><rect x="6" y="6" width="14.500" height="14" fill="#e4e4e4"/></svg>
<svg style="left:5px;top:295px;" width="27" height="27" viewBox="0 0 27 27"><path d="M3.200 15l9.200-6.200 7.100 4.400-9 8.800q-1 .5-2-.5z" fill="#e6e6e6"/><path d="M6.800 13.200l5.400-3.200 3.800 3.200z" fill="#484848"/><ellipse cx="10" cy="6.800" rx="2.300" ry="3.600" transform="rotate(15 10 6.800)" fill="none" stroke="#e6e6e6" stroke-width="1.400"/><path d="M19 13c2 1 3 3 2.800 6.500 0 2.500-3.800 2.500-3.500 0 .2-2 1.700-2.500.9-5z" fill="#e6e6e6"/></svg>
<svg style="left:5px;top:326px;" width="27" height="27" viewBox="0 0 27 27"><defs><linearGradient id="gr1" x1="0" y1="1" x2="1" y2="0"><stop offset="0" stop-color="#5a5a5a"/><stop offset="1" stop-color="#e0e0e0"/></linearGradient></defs><rect x="3.700" y="5.500" width="19.600" height="15.500" fill="url(#gr1)" stroke="#f0f0f0" stroke-width="1.200"/></svg>
<svg style="left:5px;top:364px;" width="27" height="27" viewBox="0 0 27 27"><rect x="7" y="7" width="13" height="13" fill="none" stroke="#d8d8d8" stroke-width="1.800" stroke-dasharray="2.600 1.700"/></svg>
<svg style="left:5px;top:395px;" width="27" height="27" viewBox="0 0 27 27"><path d="M4 19.500C2.500 16 5 12.500 8.500 12C11 11.600 11.500 9 13 7C15.500 3.500 21 3.500 23 7C25 11 22 15.500 17.500 16.500C14.500 17.200 13 19 11 21C8.500 23.500 5.200 22.500 4 19.500Z" fill="none" stroke="#d0d0d0" stroke-width="1.500" stroke-dasharray="2.300 1.600"/></svg>
<svg style="left:5px;top:426px;" width="27" height="27" viewBox="0 0 27 27"><path d="M5.500 21.500l9.500-9.500" stroke="#e6e6e6" stroke-width="3.200" stroke-linecap="round"/><path d="M17.500 9.500v-6M17.500 9.500l4-4.500M17.500 9.500h5.500M17.500 9.500l4 4M17.500 9.500l-4.500-4" stroke="#e6e6e6" stroke-width="1.300"/><circle cx="17" cy="10" r="2.200" fill="#e6e6e6"/></svg>
<svg style="left:5px;top:457px;" width="27" height="27" viewBox="0 0 27 27"><path d="M13 6.500h-7.500v13.500h13.500v-6.500" fill="none" stroke="#d8d8d8" stroke-width="1.800" stroke-dasharray="2.500 1.700"/><path d="M22 5.500l-7.500 7.500" stroke="#e6e6e6" stroke-width="3.400" stroke-linecap="round"/><path d="M12.800 12.200l2.500 2.500-4 1.500z" fill="#e6e6e6"/></svg>
<svg style="left:5px;top:488px;" width="27" height="27" viewBox="0 0 27 27"><path d="M9 9.500h-3.500v11h11v-3" fill="none" stroke="#d8d8d8" stroke-width="1.800" stroke-dasharray="2.500 1.700"/><path d="M17 4.500l6 5-8.500 8.500-5.500-6z" fill="#4a4a4a" stroke="#e6e6e6" stroke-width="1.600" stroke-linejoin="round"/><path d="M9 12l2.500-2.700 5.800 6-2.800 2.700z" fill="#e6e6e6"/></svg>
<span class="t" style="left:5px;top:525px;width:27px;text-align:center;font-family:'Liberation Serif','DejaVu Serif',serif;font-weight:bold;font-size:27px;line-height:29px;color:#e8e8e8">T</span>
<svg style="left:5px;top:557px;" width="27" height="27" viewBox="0 0 27 27"><path d="M10.500 4.500l6 3.500-.8 3M7.500 14.500l-3-6 6-4M7.500 14.500h3" fill="none" stroke="#e6e6e6" stroke-width="1.500" stroke-linejoin="round"/><path d="M12.500 11.500l10.500 4.500-4.500 1.700-1.700 4.800z" fill="#e6e6e6"/></svg>
<svg style="left:5px;top:588px;" width="27" height="27" viewBox="0 0 27 27"><path d="M3.500 19.500l6-6.500 8 .3-5.800 6.200z" fill="none" stroke="#e6e6e6" stroke-width="1.500" stroke-linejoin="round"/><path d="M10.500 12l7.500-7c2-1.500 5 .8 3.500 3l-5.800 6.500z" fill="#e6e6e6"/></svg>
<svg style="left:5px;top:626px;" width="27" height="27" viewBox="0 0 27 27"><path d="M15 9l-9.500 9.500-1 4 4-1 9.500-9.500z" fill="none" stroke="#e6e6e6" stroke-width="1.500" stroke-linejoin="round"/><path d="M14 7l6 6" stroke="#e6e6e6" stroke-width="2.600" stroke-linecap="round"/><path d="M17 10l3.500-3.500" stroke="#e6e6e6" stroke-width="4.500" stroke-linecap="round"/></svg>
<svg style="left:5px;top:657px;" width="27" height="27" viewBox="0 0 27 27"><path d="M8.800 16.500V6a1.400 1.400 0 0 1 2.800 0v5.800h.8V4.800a1.400 1.400 0 0 1 2.800 0v7h.8V5.800a1.400 1.400 0 0 1 2.800 0v6.700h.8V8.600a1.300 1.300 0 0 1 2.600 0v7.400c0 3-1 5-2.500 7h-8c-2.500-2.500-5.500-6-7.500-8.700-.8-1.300.9-2.500 2.100-1.400z" fill="#e6e6e6"/></svg>
<svg style="left:42px;top:131px;" width="23" height="23" viewBox="0 0 23 23"><path d="M5.500 3.500h7.500l4.500 4.500v11.500h-12z" fill="none" stroke="#d8d8d8" stroke-width="1.400"/><path d="M12.500 3.500v5h5" fill="none" stroke="#d8d8d8" stroke-width="1.200"/></svg>
<svg style="left:69px;top:131px;" width="23" height="23" viewBox="0 0 23 23"><path d="M4.500 6h14M9 5.500v-1.800h5v1.800" fill="none" stroke="#e4e4e4" stroke-width="1.700"/><path d="M6.200 8h10.600v10.500h-10.600z" fill="none" stroke="#e4e4e4" stroke-width="1.700" stroke-linejoin="round"/><path d="M9.700 8.500v9.500M13.300 8.500v9.500" stroke="#e4e4e4" stroke-width="1.500"/></svg>
<svg style="left:42px;top:678px;" width="23" height="19" viewBox="0 0 23 19"><path d="M6 11.500a3 3 0 0 1 .3-6 4.500 4.500 0 0 1 8.500-1 3.500 3.500 0 0 1 2.500 6.800z" fill="#e6e6e6"/><path d="M9.800 9h3.400v5h2.300l-4 4.500-4-4.500h2.300z" fill="#e6e6e6" stroke="#4a4a4a" stroke-width=".8"/></svg>
<svg style="left:69px;top:678px;" width="23" height="19" viewBox="0 0 23 19"><path d="M6 5h7l4 4v11h-11z" fill="none" stroke="#e6e6e6" stroke-width="1.500"/><path d="M12.500 5v4.500h4.500" fill="none" stroke="#e6e6e6" stroke-width="1.200"/></svg>
<svg style="left:96px;top:678px;" width="30" height="19" viewBox="0 0 30 19"><path d="M5 5h6.500l3.500 3.500v11h-10z" fill="none" stroke="#e6e6e6" stroke-width="1.400"/><path d="M6.500 10h3.500v3.500h-3.500zM10 13.500h3.500v3.500h-3.500z" fill="#e6e6e6"/><path d="M18.500 12h8l-4 5z" fill="#fff"/></svg>
<svg style="left:130px;top:678px;" width="23" height="19" viewBox="0 0 23 19"><path d="M5.500 5h7.500l4 4v11h-11.500z" fill="none" stroke="#e6e6e6" stroke-width="1.400"/><path d="M12.500 5v4.500h4.500" fill="none" stroke="#e6e6e6" stroke-width="1.100"/></svg>
<span class="t" style="left:130px;top:685px;width:23px;text-align:center;font-family:'Liberation Sans',sans-serif;font-size:11px;line-height:12px;color:#e6e6e6">S</span>
<svg style="left:158px;top:678px;" width="23" height="19" viewBox="0 0 23 19"><path d="M4 7h6l1.500 2h8v10h-15.500z" fill="#e6e6e6"/></svg>
<svg style="left:185px;top:678px;" width="23" height="19" viewBox="0 0 23 19"><rect x="5.500" y="8.500" width="9" height="9" fill="none" stroke="#e6e6e6" stroke-width="1.400"/><path d="M8.500 8v-2.500h9.500v9.500h-3" fill="none" stroke="#e6e6e6" stroke-width="1.400"/></svg>
<svg style="left:217px;top:678px;" width="23" height="19" viewBox="0 0 23 19"><g transform="translate(0,1.500)"><path d="M4.500 6h14M9 5.500v-1.800h5v1.800" fill="none" stroke="#e4e4e4" stroke-width="1.700"/><path d="M6.200 8h10.600v10.500h-10.600z" fill="none" stroke="#e4e4e4" stroke-width="1.700" stroke-linejoin="round"/><path d="M9.700 8.500v9.500M13.300 8.500v9.500" stroke="#e4e4e4" stroke-width="1.500"/></g></svg>
<svg style="left:819px;top:678px;" width="23" height="18" viewBox="0 0 23 18"><path d="M6 4.500h7l4 4v12h-11z" fill="none" stroke="#e6e6e6" stroke-width="1.500"/><path d="M12.500 4.500v4.500h4.500" fill="none" stroke="#e6e6e6" stroke-width="1.200"/></svg>
<svg style="left:846px;top:678px;" width="23" height="18" viewBox="0 0 23 18"><path d="M6 4.500h7l4 4v12h-11z" fill="none" stroke="#e6e6e6" stroke-width="1.500"/><path d="M12.500 4.500v4.500h4.500" fill="none" stroke="#e6e6e6" stroke-width="1.200"/></svg>
<span class="t" style="left:846px;top:685px;width:23px;text-align:center;font-family:'Liberation Sans',sans-serif;font-weight:bold;font-size:10px;line-height:11px;color:#e6e6e6">8</span>
<svg style="left:873px;top:678px;" width="23" height="18" viewBox="0 0 23 18"><path d="M6 4.500h7l4 4v12h-11z" fill="none" stroke="#e6e6e6" stroke-width="1.500"/><path d="M12.500 4.500v4.500h4.500" fill="none" stroke="#e6e6e6" stroke-width="1.200"/></svg>
<span class="t" style="left:873px;top:685px;width:23px;text-align:center;font-family:'Liberation Sans',sans-serif;font-weight:bold;font-size:10px;line-height:11px;color:#e6e6e6">1</span>
<svg style="left:900px;top:678px;" width="30" height="18" viewBox="0 0 30 18"><path d="M11 16.500h-6v-12h6l3.500 3.500v4" fill="none" stroke="#e6e6e6" stroke-width="1.400"/><path d="M10.500 4.500v4h4" fill="none" stroke="#e6e6e6" stroke-width="1.100"/><path d="M13.500 11.500v7M10 15h7" stroke="#fff" stroke-width="1.600"/><path d="M19.500 10.500h8l-4 5z" fill="#fff"/></svg>
<svg style="left:934px;top:678px;" width="23" height="18" viewBox="0 0 23 18"><path d="M4 6.500h6l1.500 2h8v10h-15.500z" fill="#e6e6e6"/></svg>
<svg style="left:968px;top:678px;" width="23" height="18" viewBox="0 0 23 18"><rect x="5.500" y="8.500" width="9" height="9" fill="none" stroke="#e6e6e6" stroke-width="1.400"/><path d="M8.500 8v-2.500h9.500v9.500h-3" fill="none" stroke="#e6e6e6" stroke-width="1.400"/></svg>
<svg style="left:984px;top:195px;" width="20" height="20" viewBox="0 0 20 20"><path d="M15.83 8.60L18.49 8.65L18.49 11.35L15.83 11.40L15.12 13.13L16.96 15.05L15.05 16.96L13.13 15.12L11.40 15.83L11.35 18.49L8.65 18.49L8.60 15.83L6.87 15.12L4.95 16.96L3.04 15.05L4.88 13.13L4.17 11.40L1.51 11.35L1.51 8.65L4.17 8.60L4.88 6.87L3.04 4.95L4.95 3.04L6.87 4.88L8.60 4.17L8.65 1.51L11.35 1.51L11.40 4.17L13.13 4.88L15.05 3.04L16.96 4.95L15.12 6.87z" fill="#fff" stroke="#fff" stroke-width="1" stroke-linejoin="round"/><circle cx="10" cy="10" r="2.300" fill="#4f9ad8"/></svg>
<svg style="left:242px;top:639px;" width="13" height="13" viewBox="0 0 13 13"><path d="M10.58 5.52L12.43 5.56L12.43 7.44L10.58 7.48L10.08 8.69L11.35 10.03L10.03 11.35L8.69 10.08L7.48 10.58L7.44 12.43L5.56 12.43L5.52 10.58L4.31 10.08L2.97 11.35L1.65 10.03L2.92 8.69L2.42 7.48L0.57 7.44L0.57 5.56L2.42 5.52L2.92 4.31L1.65 2.97L2.97 1.65L4.31 2.92L5.52 2.42L5.56 0.57L7.44 0.57L7.48 2.42L8.69 2.92L10.03 1.65L11.35 2.97L10.08 4.31z" fill="#fff" stroke="#fff" stroke-width=".6" stroke-linejoin="round"/><circle cx="6.500" cy="6.500" r="1.800" fill="#4f9ad8"/></svg>
<svg style="left:0;top:0" width="1024" height="696" viewBox="0 0 1024 696"><defs><linearGradient id="gA" x1="0" y1="0" x2="0" y2="1"><stop offset="0" stop-color="#86abdd"/><stop offset=".18" stop-color="#8db6e4"/><stop offset=".34" stop-color="#a8dcf8"/><stop offset=".52" stop-color="#c4d4de"/><stop offset=".7" stop-color="#efd8ce"/><stop offset="1" stop-color="#f3d9cd"/></linearGradient><linearGradient id="gB" x1="0" y1="0" x2="0" y2="1"><stop offset="0" stop-color="#86abdd"/><stop offset=".24" stop-color="#8fb8e6"/><stop offset=".4" stop-color="#a8dcf8"/><stop offset=".52" stop-color="#c6d2dc"/><stop offset=".66" stop-color="#d2d4d8"/><stop offset=".8" stop-color="#f0d8cc"/><stop offset="1" stop-color="#f3d9cd"/></linearGradient><linearGradient id="gC" x1="0" y1="0" x2="0" y2="1"><stop offset="0" stop-color="#86abdd"/><stop offset=".16" stop-color="#90b8e6"/><stop offset=".34" stop-color="#b4def6"/><stop offset=".5" stop-color="#d4dadc"/><stop offset=".68" stop-color="#f2d9cd"/><stop offset="1" stop-color="#f3d9cd"/></linearGradient><clipPath id="cv"><rect x="285" y="179.500" width="390.800" height="498.500"/></clipPath></defs><g clip-path="url(#cv)"><rect x="285" y="179.500" width="390.800" height="498.500" fill="#fff"/><circle cx="297" cy="223.500" r="15.500" fill="#a8dcf8"/><path d="M280 246c12-3 22-3 27 1 4 4 4 12 3.500 22-1 22-3 45-5 66-2 22-4 40-8 52-3 9-8 15-17 18z" fill="#a8dcf8"/><path d="M304 329c8-4 15-9 21-17l1 6c-6 7-14 13-22 17z" fill="#a8dcf8"/><ellipse cx="390.500" cy="407" rx="17.500" ry="24.500" fill="none" stroke="#4a8db2" stroke-width="4.200" transform="rotate(8 390.500 407)"/><path d="M383 402c5-2 9-5 12-9-2 9-4 18-5 27" fill="none" stroke="#4a8db2" stroke-width="3.600" stroke-linecap="round" stroke-linejoin="round"/><circle cx="480.500" cy="222.800" r="15.700" fill="#a8dcf8"/><circle cx="478" cy="262.700" r="17.300" fill="#f3d9cd"/><circle cx="477" cy="304.600" r="17.500" fill="#84aadc"/><circle cx="571" cy="225.600" r="16" fill="#84aadc"/><path d="M586 322c5-2 9-6 12-11l1.500 5c-3 5-8 9-13 11z" fill="#a8dcf8"/><path d="M551 249C557 244 577 244 584 249C589 254 588 263 587.500 274C586.500 299 584.500 324 582.500 349C581.500 367 580.500 384 577.500 397C575.500 405 567.500 408 557.500 408C549 408 543 406 540 403C537 399 537 391 539 383C541 373 541.500 365 541.500 353C541.500 328 540.500 303 541.500 278C542 266 545 256 551 249Z" fill="url(#gA)"/><path d="M542 349C518 352 512 394 530 405C540 410 556 410 568 406" fill="none" stroke="#f3d9cd" stroke-width="6" stroke-linecap="round"/><ellipse cx="561.700" cy="285.800" rx="30" ry="16.500" fill="none" stroke="#f0523c" stroke-width="6" transform="rotate(11 561.700 285.800)"/><ellipse cx="558" cy="327.700" rx="26.500" ry="13.500" fill="none" stroke="#f0523c" stroke-width="6" transform="rotate(-2 558 327.700)"/><ellipse cx="657" cy="407" rx="18.500" ry="19.500" fill="none" stroke="#4a8db2" stroke-width="5"/><path d="M651 400c1-6 10-7 11-1 .5 5-6 9-9 14 4-2 9-1 12 1" fill="none" stroke="#4a8db2" stroke-width="4" stroke-linecap="round" stroke-linejoin="round"/><circle cx="319.500" cy="484" r="16" fill="#84aadc"/><path d="M331 592c7-5 12-11 16-20l2 5c-4 8-10 15-17 20z" fill="#a8dcf8"/><path d="M297 506c8-5 26-5 32 0 5 5 4.500 14 4 26-1 25-3 50-5 72-2 20-4 36-8 48-4 10-14 14-26 16l-14 1v-50c2-22 2-45 4-68 1-18 4-38 13-45z" fill="url(#gB)"/><path d="M285 596c-4 2-8 6-10 10" stroke="#a8dcf8" stroke-width="4"/><circle cx="488" cy="485" r="17" fill="#a8dcf8"/><circle cx="488" cy="523" r="17" fill="#a8dcf8"/><circle cx="484.500" cy="522.600" r="17" fill="#f3d9cd"/><circle cx="487.500" cy="565" r="17" fill="#a8dcf8"/><circle cx="484" cy="564.600" r="17" fill="#84aadc"/><circle cx="581" cy="487.500" r="16.500" fill="#a8dcf8"/><circle cx="578" cy="486.700" r="16.500" fill="#84aadc"/><path d="M592 591c7-4 12-10 16-19l3 2-2 2 2 2c-4 8-10 15-17 20z" fill="#a8dcf8"/><path d="M560 510c7-6 28-6 36 0 5 5 4 15 3 27-2 26-5 52-9 76-3 18-6 36-11 46-4 8-14 12-26 12-11 0-20-4-24-10-4-7-1-16 3-24 6-12 12-20 13-34 1-22 0-44 2-66 1-12 5-22 13-27z" fill="#a8dcf8"/><path d="M557 510c7-6 28-6 35 0 5 5 4 15 3 27-2 26-5 52-9 76-3 18-6 36-11 46-4 8-13 11-24 11-10 0-18-3-22-9-4-7-1-16 3-24 6-12 12-20 13-34 1-22 0-44 2-66 1-12 4-22 10-27z" fill="url(#gC)"/><path d="M548 613C538 620 531 634 532 646C533 655 537 661 541 663C545 650 549 632 548 613Z" fill="#fff"/><path d="M550 607C528 612 517 650 535 666C545 673 560 672 570 668" fill="none" stroke="#a8dcf8" stroke-width="8" stroke-linecap="round"/><path d="M549 609C530 614 520 650 537 664C546 670 560 670 568 667" fill="none" stroke="#f3d9cd" stroke-width="3.500" stroke-linecap="round"/></g></svg>
<div style="left:412px;top:179.5px;width:14.2px;height:498.5px;background:#000;"></div>
<div style="left:285px;top:433px;width:390.8px;height:13.6px;background:#000;"></div>
<span class="t" style='left:30px;top:8px;font-size:12px;line-height:16px;color:#000;font-family:"Liberation Sans",sans-serif;letter-spacing:-0.080px;'>MediBang Paint Pro (64bit)</span>
<span class="t" style='left:9px;top:33.5px;font-size:12.5px;line-height:16px;color:#d4d4d4;letter-spacing:-0.531px;'>Tệp(F)</span>
<span class="t" style='left:58px;top:33.5px;font-size:12.5px;line-height:16px;color:#d4d4d4;letter-spacing:-0.392px;'>Chỉnh sửa(E)</span>
<span class="t" style='left:141px;top:33.5px;font-size:12.5px;line-height:16px;color:#d4d4d4;letter-spacing:-0.221px;'>Lớp(L)</span>
<span class="t" style='left:191px;top:33.5px;font-size:12.5px;line-height:16px;color:#d4d4d4;letter-spacing:-0.328px;'>Bộ lọc(R)</span>
<span class="t" style='left:256px;top:33.5px;font-size:12.5px;line-height:16px;color:#d4d4d4;letter-spacing:-0.417px;'>Chọn(S)</span>
<span class="t" style='left:314px;top:33.5px;font-size:12.5px;line-height:16px;color:#d4d4d4;letter-spacing:-0.065px;'>Chụp(N)</span>
<span class="t" style='left:376px;top:33.5px;font-size:12.5px;line-height:16px;color:#d4d4d4;letter-spacing:-0.134px;'>Màu (C)</span>
<span class="t" style='left:435px;top:33.5px;font-size:12.5px;line-height:16px;color:#d4d4d4;letter-spacing:-0.417px;'>Xem(V)</span>
<span class="t" style='left:490px;top:33.5px;font-size:12.5px;line-height:16px;color:#d4d4d4;letter-spacing:-0.253px;'>Công cụ(T)</span>
<span class="t" style='left:565px;top:33.5px;font-size:12.5px;line-height:16px;color:#d4d4d4;letter-spacing:-0.344px;'>Cửa sổ(W)</span>
<span class="t" style='left:636px;top:33.5px;font-size:12.5px;line-height:16px;color:#d4d4d4;letter-spacing:-0.028px;'>Cloud</span>
<span class="t" style='left:684px;top:33.5px;font-size:12.5px;line-height:16px;color:#d4d4d4;letter-spacing:-0.164px;'>Help</span>
<span class="t" style='left:563px;top:60.5px;font-size:11.5px;line-height:15px;color:#e0e0e0;letter-spacing:-0.315px;'>Khử răng cưa</span>
<span class="t" style='left:643px;top:60.5px;font-size:11.5px;line-height:15px;color:#e0e0e0;letter-spacing:-0.634px;'>Điều chỉnh</span>
<span class="t" style='left:700px;top:60.5px;font-size:11.5px;line-height:15px;color:#b8b8b8;letter-spacing:-0.586px;'>34</span>
<span class="t" style='left:822px;top:60.5px;font-size:11.5px;line-height:15px;color:#8a8a8a;letter-spacing:-0.938px;'>Cạnh mềm</span>
<span class="t" style='left:119.5px;top:89px;font-size:11.5px;line-height:15px;color:#d0d0d0;letter-spacing:-0.791px;'>Bảng màu</span>
<span class="t" style='left:132px;top:170.5px;font-size:11.5px;line-height:15px;color:#d0d0d0;letter-spacing:-0.609px;'>Màu</span>
<span class="t" style='left:112px;top:316.5px;font-size:11.5px;line-height:15px;color:#d0d0d0;letter-spacing:-0.526px;'>Kiểm soát cọ</span>
<span class="t" style='left:111px;top:495.5px;font-size:11.5px;line-height:15px;color:#d0d0d0;letter-spacing:-0.415px;'>Xem trước cọ</span>
<span class="t" style='left:91px;top:591.5px;font-size:11.5px;line-height:15px;color:#d0d0d0;letter-spacing:-0.170px;'>Cọ: Watercolor (Wet)</span>
<span class="t" style='left:103px;top:134px;font-size:12px;line-height:16px;color:#ccc;letter-spacing:0.099px;'>---</span>
<span class="t" style='left:44px;top:242px;font-size:10px;line-height:14px;color:#d0d0d0;letter-spacing:-0.431px;'>R:255</span>
<span class="t" style='left:44px;top:253px;font-size:10px;line-height:14px;color:#d0d0d0;letter-spacing:-0.637px;'>G:255</span>
<span class="t" style='left:44px;top:266px;font-size:10px;line-height:14px;color:#d0d0d0;letter-spacing:0.629px;'>#FFFFFF</span>
<span class="t" style='left:243px;top:345px;font-size:12px;line-height:16px;color:#d8d8d8;letter-spacing:0.130px;'>137</span>
<span class="t" style='left:242px;top:369.5px;font-size:12px;line-height:16px;color:#dcdcdc;letter-spacing:0.395px;'>18 %</span>
<span class="t" style='left:52px;top:399px;font-size:12px;line-height:16px;color:#dcdcdc;letter-spacing:0.099px;'>Dễ trộn màu</span>
<span class="t" style='left:220px;top:399px;font-size:12px;line-height:16px;color:#dcdcdc;'>0</span>
<span class="t" style='left:53px;top:429px;font-size:12px;line-height:16px;color:#dcdcdc;letter-spacing:-0.174px;'>Tài màu</span>
<span class="t" style='left:215px;top:429px;font-size:12px;line-height:16px;color:#dcdcdc;letter-spacing:0.130px;'>100</span>
<span class="t" style='left:40px;top:511.5px;font-size:11px;line-height:15px;color:#4a8cc4;letter-spacing:-0.301px;'>* 9.94mm</span>
<span class="t" style='left:59.5px;top:617.5px;font-size:11.5px;line-height:15px;color:#ee8a8a;font-family:"DejaVu Sans","Liberation Sans",sans-serif;letter-spacing:-0.320px;'>1000</span>
<span class="t" style='left:92px;top:617.5px;font-size:11.5px;line-height:15px;color:#f0f0f0;font-family:"DejaVu Sans","Liberation Sans",sans-serif;letter-spacing:-0.130px;'>Pen</span>
<span class="t" style='left:60.5px;top:637.5px;font-size:11.5px;line-height:15px;color:#f08aa0;font-family:"DejaVu Sans","Liberation Sans",sans-serif;font-weight:bold;letter-spacing:-0.172px;'>137</span>
<span class="t" style='left:92px;top:637.5px;font-size:11.5px;line-height:15px;color:#fff;font-family:"DejaVu Sans","Liberation Sans",sans-serif;font-weight:bold;letter-spacing:-0.333px;'>Watercolor (Wet)</span>
<span class="t" style='left:60.5px;top:657.5px;font-size:11.5px;line-height:15px;color:#ee8a8a;font-family:"DejaVu Sans","Liberation Sans",sans-serif;letter-spacing:-0.484px;'>124</span>
<span class="t" style='left:92px;top:657.5px;font-size:11.5px;line-height:15px;color:#f0f0f0;font-family:"DejaVu Sans","Liberation Sans",sans-serif;letter-spacing:-0.108px;'>Pen (Sharp)</span>
<span class="t" style='left:291.5px;top:90px;font-size:11.5px;line-height:15px;color:#d0d0d0;letter-spacing:-0.492px;'>Untitled</span>
<span class="t" style='left:342px;top:90px;font-size:11.5px;line-height:15px;color:#d0d0d0;letter-spacing:-0.533px;'>566.png</span>
<span class="t" style='left:394px;top:90px;font-size:11.5px;line-height:15px;color:#d0d0d0;letter-spacing:-0.462px;'>567.png</span>
<span class="t" style='left:447px;top:90px;font-size:11.5px;line-height:15px;color:#d0d0d0;letter-spacing:-0.492px;'>Untitled</span>
<span class="t" style='left:498px;top:90px;font-size:11.5px;line-height:15px;color:#d0d0d0;letter-spacing:-0.537px;'>568b.png</span>
<span class="t" style='left:555px;top:90px;font-size:11.5px;line-height:15px;color:#d0d0d0;letter-spacing:-0.462px;'>569.png</span>
<span class="t" style='left:607px;top:90px;font-size:11.5px;line-height:15px;color:#d0d0d0;letter-spacing:-0.462px;'>570.png</span>
<span class="t" style='left:659px;top:90px;font-size:11.5px;line-height:15px;color:#d0d0d0;letter-spacing:-0.533px;'>571.png</span>
<span class="t" style='left:711px;top:88.5px;font-size:11.5px;line-height:15px;color:#e0e0e0;letter-spacing:-0.533px;'>572.png</span>
<span class="t" style='left:897px;top:89px;font-size:11.5px;line-height:15px;color:#d6d6d6;letter-spacing:-0.557px;'>Lớp</span>
<span class="t" style='left:819px;top:113px;font-size:11.5px;line-height:15px;color:#d6d6d6;letter-spacing:-0.395px;'>Độ trong</span>
<span class="t" style='left:992px;top:113px;font-size:11.5px;line-height:15px;color:#d6d6d6;letter-spacing:-0.575px;'>100 %</span>
<span class="t" style='left:818px;top:138px;font-size:11.5px;line-height:15px;color:#d6d6d6;letter-spacing:-0.328px;'>Pha trộn</span>
<span class="t" style='left:877.5px;top:138px;font-size:11.5px;line-height:15px;color:#cfcfcf;letter-spacing:-0.456px;'>Bình thường</span>
<span class="t" style='left:838.5px;top:164px;font-size:11.5px;line-height:15px;color:#7c7c7c;letter-spacing:-0.501px;'>Bảo vệ alpha</span>
<span class="t" style='left:929px;top:164px;font-size:11.5px;line-height:15px;color:#d6d6d6;letter-spacing:-0.319px;'>Xén bớt</span>
<span class="t" style='left:995px;top:164px;font-size:11.5px;line-height:15px;color:#d6d6d6;letter-spacing:-0.504px;'>Khóa</span>
<span class="t" style='left:901.5px;top:236.5px;font-size:12.5px;line-height:16px;color:#f4f4f4;letter-spacing:-0.359px;'>Lớp5</span>
<span class="t" style='left:911px;top:276.5px;font-size:12.5px;line-height:16px;color:#f4f4f4;letter-spacing:-0.359px;'>Lớp7</span>
<span class="t" style='left:901.5px;top:316.5px;font-size:12.5px;line-height:16px;color:#f4f4f4;letter-spacing:-0.359px;'>Lớp8</span>
<span class="t" style='left:911px;top:356.5px;font-size:12.5px;line-height:16px;color:#f4f4f4;letter-spacing:-0.259px;'>Lớp10</span>
<span class="t" style='left:901.5px;top:396.5px;font-size:12.5px;line-height:16px;color:#f4f4f4;letter-spacing:-0.359px;'>Lớp8</span>
<span class="t" style='left:911px;top:436.5px;font-size:12.5px;line-height:16px;color:#f4f4f4;letter-spacing:-0.259px;'>Lớp11</span>
<span class="t" style='left:901.5px;top:476.5px;font-size:12.5px;line-height:16px;color:#f4f4f4;letter-spacing:-0.359px;'>Lớp2</span>
<span class="t" style='left:901.5px;top:516.5px;font-size:12.5px;line-height:16px;color:#f4f4f4;letter-spacing:-0.359px;'>Lớp2</span>
<span class="t" style='left:901.5px;top:556.5px;font-size:12.5px;line-height:16px;color:#f4f4f4;letter-spacing:-0.359px;'>Lớp1</span>
<span class="t" style='left:901.5px;top:596.5px;font-size:12.5px;line-height:16px;color:#f4f4f4;letter-spacing:-0.259px;'>Lớp12</span>
<span class="t" style='left:901px;top:196.5px;font-size:13px;line-height:17px;color:#fff;font-family:"DejaVu Sans Condensed","DejaVu Sans",sans-serif;font-weight:bold;letter-spacing:-0.080px;'>@Tranma1985</span>
<span class="t" style='left:440px;top:456.5px;font-size:16px;line-height:20px;color:#7b2a2e;font-family:"Liberation Sans",sans-serif;font-weight:bold;letter-spacing:-0.683px;'>@TRANMA1985</span>
<span class="t" style='left:440px;top:474.5px;font-size:16px;line-height:20px;color:#7b2a2e;font-family:"Liberation Sans",sans-serif;font-weight:bold;letter-spacing:0.216px;'>#HD247</span>
</div>
</body></html>
